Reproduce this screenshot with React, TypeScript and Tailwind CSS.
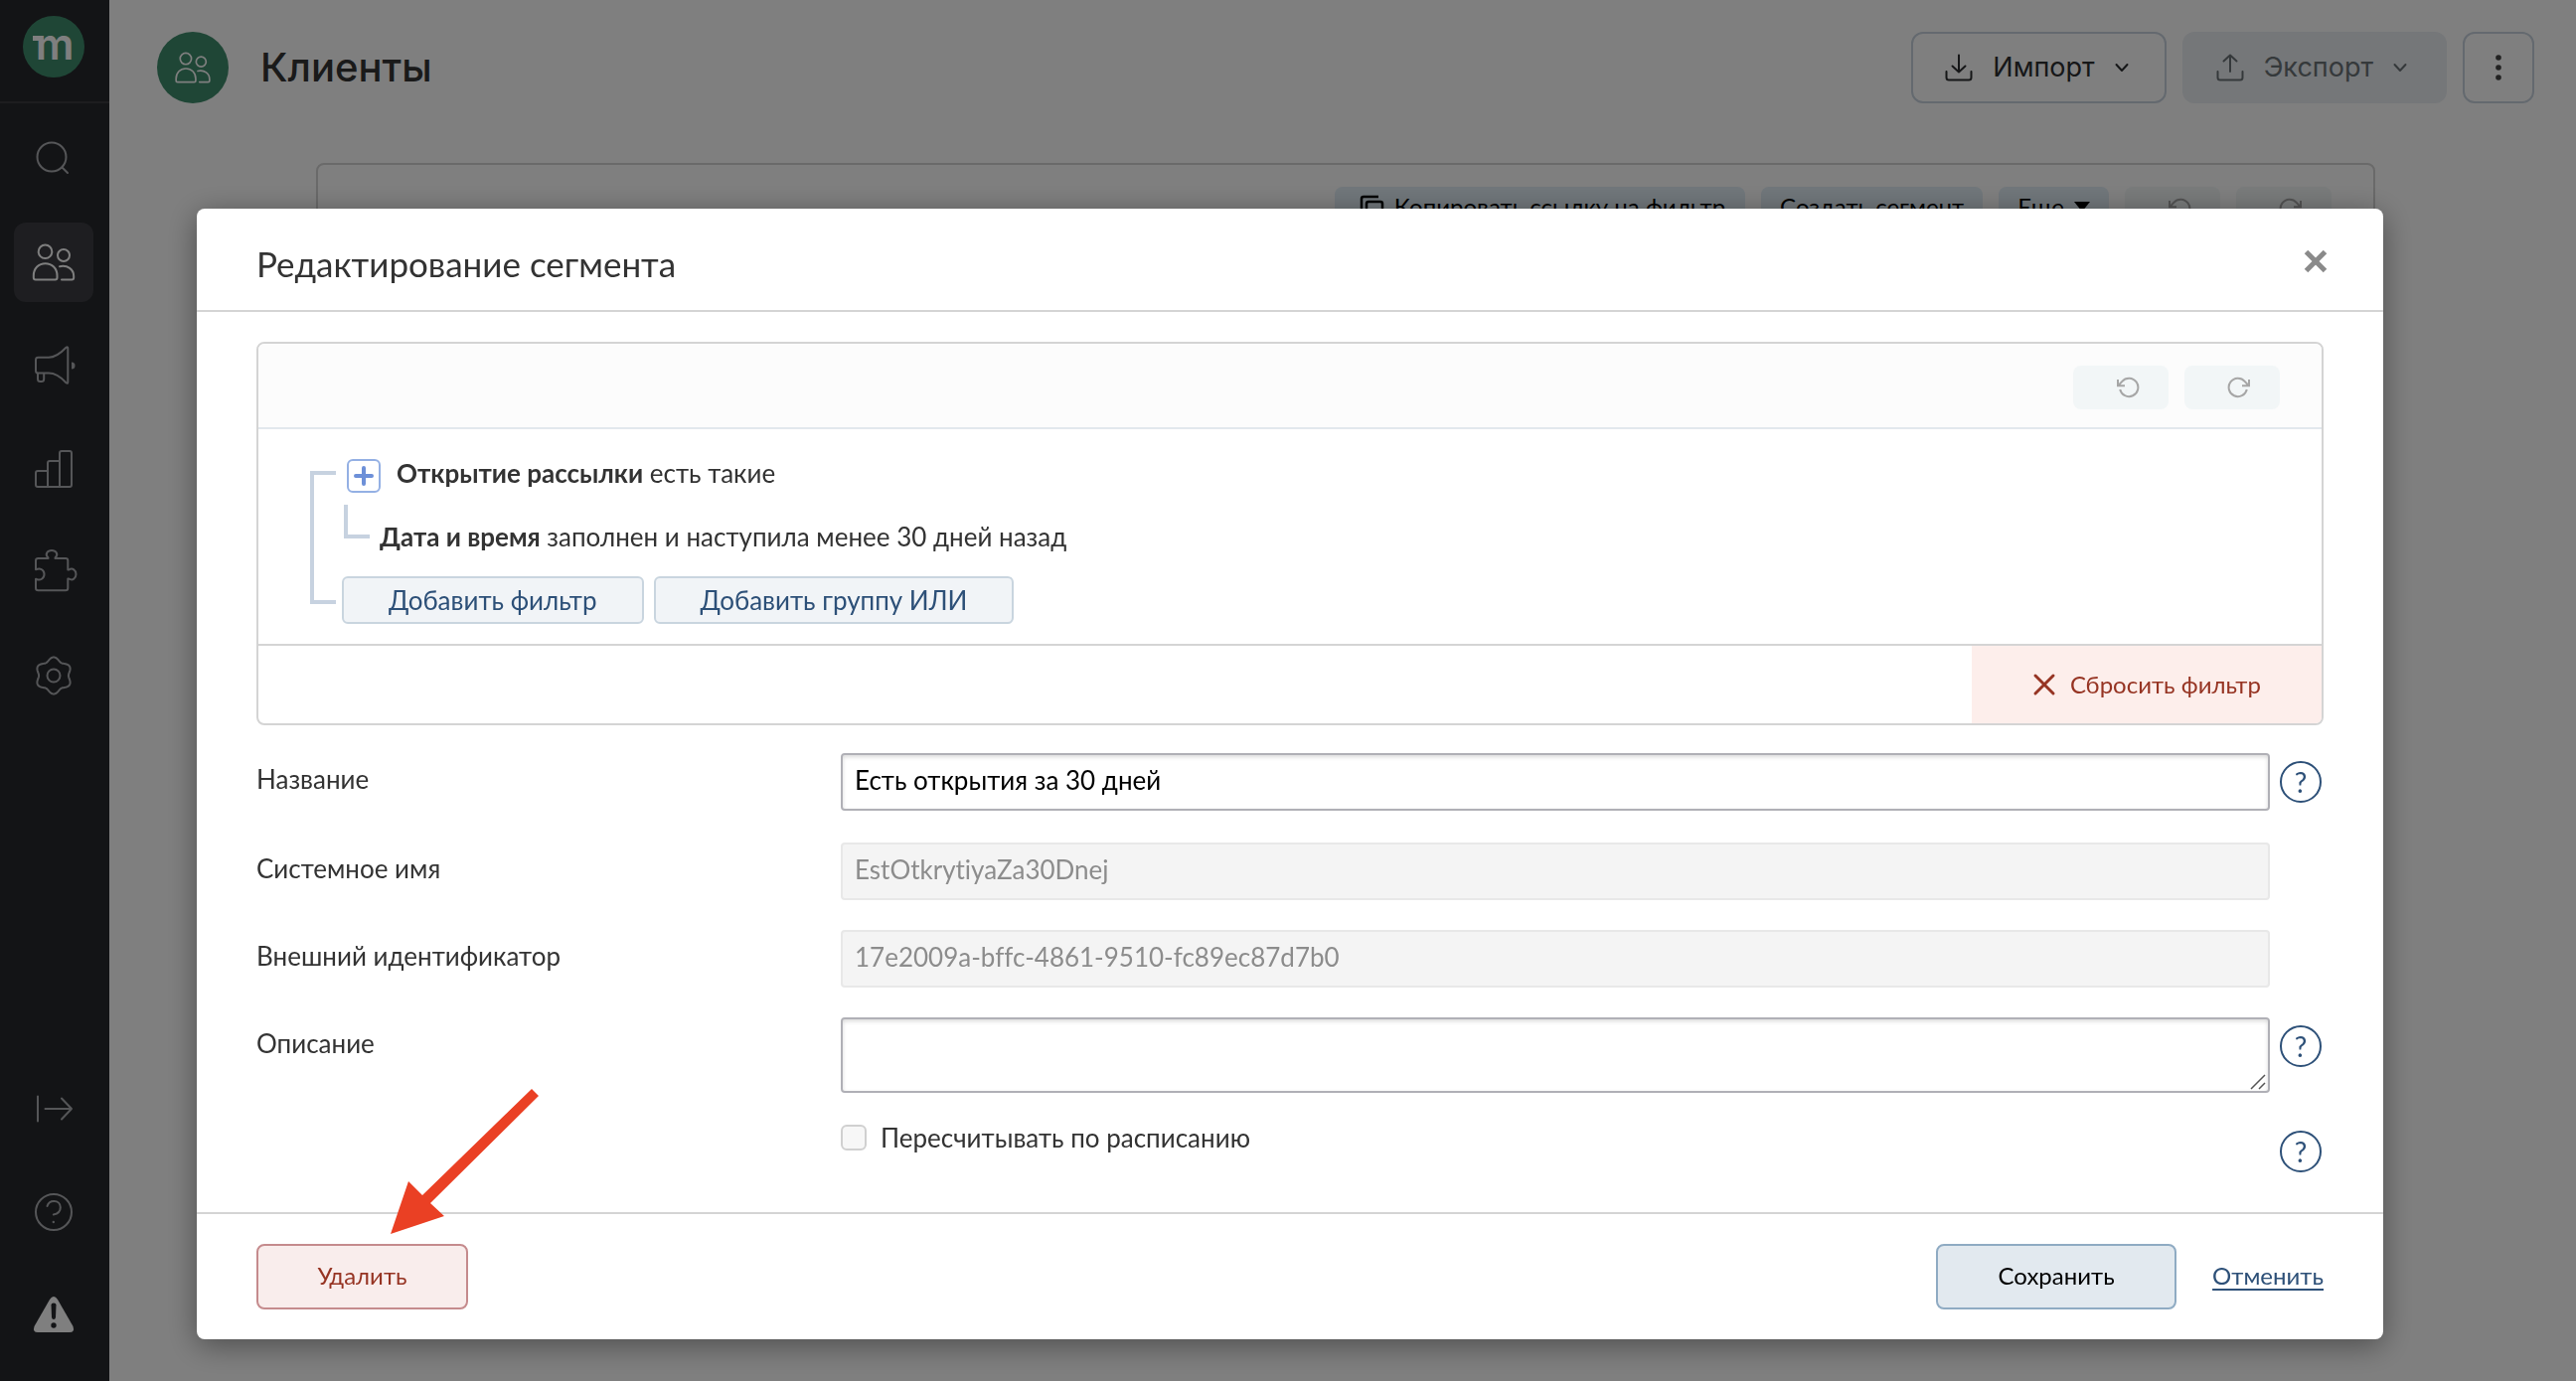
import React, { useState } from "react";

type IconProps = { className?: string };

const strokeProps = {
  fill: "none",
  stroke: "currentColor",
  strokeWidth: 2,
  strokeLinecap: "round" as const,
  strokeLinejoin: "round" as const,
};

const SearchIcon = () => (
  <svg viewBox="0 0 48 48" className="size-12" {...strokeProps}>
    <circle cx="22" cy="22" r="14.5" />
    <path d="M32.5 32.5 38 38" />
  </svg>
);

const ClientsIcon = ({ className = "size-12" }: IconProps) => (
  <svg viewBox="0 0 48 48" className={className} {...strokeProps}>
    <circle cx="15.5" cy="13.3" r="6.8" />
    <circle cx="34" cy="17" r="6" />
    <path d="M3.8 37.5C3.8 30 9 25.2 15.6 25.2S27.5 30 27.5 37.5v2q0 2-2 2H5.8q-2 0-2-2z" />
    <path d="M30 28.2c8-1.700 14.200 3 14.200 9.800v1.500q0 2-2 2H32" />
  </svg>
);

const MegaphoneIcon = () => (
  <svg viewBox="0 0 48 48" className="size-12" {...strokeProps}>
    <path d="M8.500 15.800H19C27 15.800 33 9.500 36.500 5.800Q38.300 4.600 38.300 6.500V40.500Q38.300 42.600 36.500 41.200C33 37.500 27 31.600 19 31.600H8.500Q6 31.600 6 29.200V18.200Q6 15.800 8.500 15.800z" />
    <path d="M8 32v5.500q0 2.500 2.500 2.500h1.200q2.500 0 2.500-2.500V32" />
    <path d="M42 20.500a3.500 3.500 0 0 1 0 7z" fill="currentColor" stroke="none" />
  </svg>
);

const ChartIcon = () => (
  <svg viewBox="0 0 48 48" className="size-12" {...strokeProps}>
    <path d="M18 42H8q-2 0-2-2V28q0-2 2-2h10z" />
    <path d="M18 42V18q0-2 2-2h10v26z" />
    <path d="M30 42V8q0-2 2-2h8q2 0 2 2v32q0 2-2 2z" />
  </svg>
);

const PuzzleIcon = () => (
  <svg viewBox="0 0 48 48" className="size-12" {...strokeProps}>
    <path d="M8.500 10H18.500V9.500C14.500 5.500 18 2 22 2s7.500 3.500 3.500 7.500V10H36q2.300 0 2.300 2.300V21.500h1C43 19 46.500 22 46.500 26s-3.500 7-7.200 4.500h-1V40q0 2.300-2.300 2.300H8.500Q6 42.300 6 40V30.800h.5C10.500 33 14.500 30 14.500 26s-4-7-8-4.800H6V12.300Q6 10 8.500 10z" />
  </svg>
);

const gearPath =
  Array.from({ length: 120 }, (_, i) => {
    const angle = (i * Math.PI) / 60;
    const r = 16.7 + 1.8 * Math.cos(6 * angle);
    const x = (24 + r * Math.sin(angle)).toFixed(2);
    const y = (24 - r * Math.cos(angle)).toFixed(2);
    return `${i === 0 ? "M" : "L"}${x} ${y}`;
  }).join("") + "z";

const GearIcon = () => (
  <svg viewBox="0 0 48 48" className="size-12" {...strokeProps}>
    <path d={gearPath} />
    <circle cx="24" cy="24" r="6.500" />
  </svg>
);

const ExpandIcon = () => (
  <svg viewBox="0 0 48 48" className="size-12" {...strokeProps}>
    <path d="M8 11.500v25M15.500 24H42M32 13.500 42 24 32 34.500" />
  </svg>
);

const QuestionIcon = () => (
  <svg viewBox="0 0 48 48" className="size-12" {...strokeProps}>
    <circle cx="24" cy="24" r="18" />
    <path d="M17.500 18c1-3.500 4-5 6.800-5 3.700 0 6.500 2.600 6.500 6.200 0 4-3 6.500-7 7.200" />
    <circle cx="23.800" cy="34" r="1.200" fill="currentColor" stroke="none" />
  </svg>
);

const WarningIcon = () => (
  <svg viewBox="0 0 48 48" className="size-12" fill="currentColor">
    <path d="M20 8Q24 2 28 8L43.500 35Q45.500 41 40 41H8Q2.500 41 4.500 35z" />
    <path d="M21.500 13.500q0-2 2.500-2t2.500 2L26 26q-.3 2-2 2t-2-2z" fill="#26282c" />
    <circle cx="24" cy="34" r="2.700" fill="#26282c" />
  </svg>
);

const UndoIcon = ({ className = "" }: IconProps) => (
  <svg viewBox="0 0 24 24" className={`size-6 ${className}`} fill="none" stroke="currentColor" strokeWidth="2">
    <path d="M2 4v6.200h7M2.500 10 6.300 5.800A9.200 9.200 0 1 1 4.200 14" />
  </svg>
);

const DownloadIcon = () => (
  <svg viewBox="0 0 28 28" className="size-7" {...strokeProps}>
    <path d="M1.500 18v6q0 2.500 2.500 2.500h20q2.500 0 2.500-2.500v-6M14 1.500V18M7.500 12.500 14 18.500l6.500-6" />
  </svg>
);

const UploadIcon = () => (
  <svg viewBox="0 0 28 28" className="size-7" {...strokeProps}>
    <path d="M1.500 18v6q0 2.500 2.500 2.500h20q2.500 0 2.500-2.500v-6M14 18V1.500M7.500 7.500 14 1.500l6.500 6" />
  </svg>
);

const ChevronIcon = () => (
  <svg viewBox="0 0 14 14" className="size-3.5" {...strokeProps}>
    <path d="M1.500 4 7 10l5.500-6" />
  </svg>
);

const navItems = [
  { label: "Поиск", icon: <SearchIcon />, active: false },
  { label: "Клиенты", icon: <ClientsIcon />, active: true },
  { label: "Кампании", icon: <MegaphoneIcon />, active: false },
  { label: "Отчеты", icon: <ChartIcon />, active: false },
  { label: "Интеграции", icon: <PuzzleIcon />, active: false },
  { label: "Настройки", icon: <GearIcon />, active: false },
];

const bottomItems = [
  { label: "Развернуть", icon: <ExpandIcon />, active: false },
  { label: "Помощь", icon: <QuestionIcon />, active: false },
  { label: "Предупреждения", icon: <WarningIcon />, active: false, bright: true },
];

const NavButton = ({ label, icon, active, bright }: { label: string; icon: React.ReactNode; active: boolean; bright?: boolean }) => (
  <button
    aria-label={label}
    className={`flex size-20 items-center justify-center rounded-xl ${
      active ? "bg-[#3c3d42]" : ""
    } ${active || bright ? "text-white" : "text-[#abacb0]"}`}
  >
    {icon}
  </button>
);

const Sidebar = () => (
  <aside className="flex w-[110px] shrink-0 flex-col bg-[#26282c]">
    <div className="flex h-[104px] justify-center border-b-2 border-[#3a3b3f] pr-0.5 pt-4">
      <svg viewBox="0 0 62 62" className="size-[62px] overflow-visible">
        <circle cx="31" cy="31" r="31" fill="#3f8d6d" />
        <rect x="10" y="20" width="7" height="5" fill="#fff" />
        <text x="32" y="44" textAnchor="middle" fill="#fff" fontFamily="Inter, sans-serif" fontWeight="600" fontSize="43">
          m
        </text>
      </svg>
    </div>
    <nav className="flex flex-1 flex-col items-center gap-6 pr-0.5 pb-[26px] pt-4">
      {navItems.map((item) => (
        <NavButton key={item.label} {...item} />
      ))}
      <div className="mt-auto flex flex-col gap-6">
        {bottomItems.map((item) => (
          <NavButton key={item.label} {...item} />
        ))}
      </div>
    </nav>
  </aside>
);

const PageHeader = () => (
  <header className="flex items-center justify-between pl-12 pr-[42px] pt-8 font-['Inter',sans-serif]">
    <div className="flex items-center gap-8">
      <span className="flex size-[72px] items-center justify-center rounded-full bg-[#3f8d6d] text-white">
        <ClientsIcon className="size-10" />
      </span>
      <h1 className="text-[40px] leading-[68px] font-medium text-[#343434]">Клиенты</h1>
    </div>
    <div className="flex gap-4 text-[27px]">
      <button className="flex h-[72px] items-center gap-5 rounded-xl border-2 border-[#c8d3de] px-8 pr-9 text-[#2c2e30]">
        <DownloadIcon />
        Импорт
        <ChevronIcon />
      </button>
      <button className="flex h-[72px] items-center gap-5 rounded-xl bg-[#ebeff3] pl-[34px] pr-10 text-[#6b7276]">
        <UploadIcon />
        Экспорт
        <ChevronIcon />
      </button>
      <button
        aria-label="Еще"
        className="flex size-[72px] items-center justify-center rounded-xl border-2 border-[#c8d3de] text-[#444]"
      >
        <svg viewBox="0 0 6 28" className="h-7 w-1.5" fill="currentColor">
          <circle cx="3" cy="4" r="2.800" />
          <circle cx="3" cy="14" r="2.800" />
          <circle cx="3" cy="24" r="2.800" />
        </svg>
      </button>
    </div>
  </header>
);

const PageFilter = () => (
  <section className="ml-52 mr-[202px] mt-[60px] h-[600px] rounded-lg border-2 border-[#d4d4d4]">
    <div className="flex justify-end gap-4 pr-[42px] pt-[22px] text-2xl text-black">
      <button className="flex h-11 items-center gap-2.5 rounded-lg bg-[#e2eef6] pb-1 pl-6 pr-5">
        <svg viewBox="0 0 26 26" className="size-[26px]" fill="none" stroke="currentColor" strokeWidth="2.500">
          <path d="M3 18V5q0-2 2-2h15" />
          <rect x="8" y="8" width="16" height="16" rx="2" />
        </svg>
        Копировать ссылку на фильтр
      </button>
      <button className="h-11 rounded-lg bg-[#e2eef6] px-[19px] pb-1">Создать сегмент</button>
      <button className="flex h-11 items-center gap-2.5 rounded-lg bg-[#e2eef6] px-[19px] pb-1">
        Еще
        <svg viewBox="0 0 16 10" className="h-2.5 w-4" fill="currentColor">
          <path d="M0 0h16L8 10z" />
        </svg>
      </button>
      <HistoryButtons />
    </div>
  </section>
);

const HistoryButtons = () => (
  <>
    <button aria-label="Отменить действие" className="flex h-11 w-24 items-center rounded-lg bg-[#f2f6f7] pl-[43px] text-[#a6a6a6]">
      <UndoIcon />
    </button>
    <button aria-label="Повторить действие" className="flex h-11 w-24 items-center rounded-lg bg-[#f2f6f7] pl-[43px] text-[#a6a6a6]">
      <UndoIcon className="-scale-x-100" />
    </button>
  </>
);

const addButtonClass =
  "h-12 rounded-md border-2 border-[#c9d5df] bg-[#f1f4f7] px-[45px] text-[26px] text-[#2d5078]";

const FilterBox = () => (
  <section className="overflow-hidden rounded-lg border-2 border-[#d4d4d4]">
    <div className="flex justify-end gap-4 border-b-2 border-[#e2e8ed] bg-[#fcfcfc] pb-[18px] pr-[42px] pt-[22px]">
      <HistoryButtons />
    </div>
    <div className="flex pb-5 pl-[52px]">
      <div className="mt-[42px] h-[134px] w-[26px] border-y-4 border-l-4 border-[#c7d2e0]" />
      <div className="ml-1.5 pt-[30px] text-[26px] leading-7 text-[#333]">
        <div className="flex items-start pl-[5px]">
          <button
            aria-label="Добавить условие"
            className="flex size-[34px] items-center justify-center rounded-md border-2 border-[#94b0e4] text-[#6d90d8]"
          >
            <svg viewBox="0 0 20 20" className="size-5" fill="none" stroke="currentColor" strokeWidth="4" strokeLinecap="round">
              <path d="M10 2v16M2 10h16" />
            </svg>
          </button>
          <p className="ml-4">
            <b>Открытие рассылки</b> есть такие
          </p>
        </div>
        <div className="mt-3 flex items-start pl-0.5">
          <div className="h-[34px] w-[26px] border-b-4 border-l-4 border-[#c7d2e0]" />
          <p className="ml-2.5 mb-1.5 mt-[18px]">
            <b>Дата и время</b> заполнен и наступила менее 30 дней назад
          </p>
        </div>
        <div className="mt-5 flex gap-2.5">
          <button className={addButtonClass}>Добавить фильтр</button>
          <button className={addButtonClass}>Добавить группу ИЛИ</button>
        </div>
      </div>
    </div>
    <div className="flex justify-end border-t-2 border-[#d4d4d4]">
      <button className="flex h-[78px] w-[352px] items-center justify-center gap-3.5 bg-[#fdeeeb] text-2xl text-[#963423]">
        <svg viewBox="0 0 24 24" className="size-6" fill="none" stroke="currentColor" strokeWidth="3" strokeLinecap="round">
          <path d="M3 3l18 18M21 3 3 21" />
        </svg>
        Сбросить фильтр
      </button>
    </div>
  </section>
);

const HelpButton = () => (
  <button
    aria-label="Подсказка"
    className="ml-2.5 mb-2.5 mt-2 flex size-[42px] items-center justify-center rounded-full border-2 border-[#2d5078] text-[28px] leading-none text-[#2d5078]"
  >
    ?
  </button>
);

const rowClass = "grid grid-cols-[588px_1fr_54px] items-start";
const labelClass = "leading-[52px] text-[#333]";
const disabledInputClass =
  "h-[58px] w-full rounded border-2 border-[#e8e8e8] bg-[#f4f4f4] px-3 pb-1 text-[#8c8c8c] [font-variant-ligatures:none]";

const SegmentForm = () => {
  const [name, setName] = useState("Есть открытия за 30 дней");
  const [description, setDescription] = useState("");
  const [scheduled, setScheduled] = useState(false);

  return (
    <form className="mt-7 flex flex-col gap-[30px] text-[26px]">
      <div className={rowClass}>
        <label htmlFor="name" className={labelClass}>
          Название
        </label>
        <input
          id="name"
          value={name}
          onChange={(e) => setName(e.target.value)}
          className="h-[58px] w-full rounded border-2 border-[#b0b0b6] px-3 pb-1 text-black shadow-[inset_0_2px_4px_rgba(0,0,0,0.15)]"
        />
        <HelpButton />
      </div>
      <div className={rowClass}>
        <label htmlFor="system-name" className={labelClass}>
          Системное имя
        </label>
        <input id="system-name" disabled value="EstOtkrytiyaZa30Dnej" className={disabledInputClass} />
      </div>
      <div className={rowClass}>
        <label htmlFor="external-id" className={labelClass}>
          Внешний идентификатор
        </label>
        <input id="external-id" disabled value="17e2009a-bffc-4861-9510-fc89ec87d7b0" className={disabledInputClass} />
      </div>
      <div className={rowClass}>
        <label htmlFor="description" className={labelClass}>
          Описание
        </label>
        <div className="relative h-[76px]">
          <textarea
            id="description"
            value={description}
            onChange={(e) => setDescription(e.target.value)}
            className="block h-full w-full resize-none rounded border-2 border-[#b0b0b6] px-3 py-2 shadow-[inset_0_2px_4px_rgba(0,0,0,0.15)]"
          />
          <svg viewBox="0 0 16 16" className="absolute bottom-[3px] right-1 size-4" fill="none" stroke="#555" strokeWidth="1.500">
            <path d="M1 15 15 1M9 15l6-6" />
          </svg>
        </div>
        <HelpButton />
      </div>
      <div className={rowClass}>
        <label className="col-start-2 flex items-center gap-3.5 leading-[30px] text-[#333]">
          <input
            type="checkbox"
            checked={scheduled}
            onChange={(e) => setScheduled(e.target.checked)}
            className="size-[26px] appearance-none rounded-md border-2 border-[#d0d0d0] bg-[#f7f7f7] checked:bg-[#2d5078]"
          />
          Пересчитывать по расписанию
        </label>
        <HelpButton />
      </div>
    </form>
  );
};

const SegmentDialog = () => (
  <div className="fixed inset-0 overflow-hidden bg-black/50 pl-[198px] pr-[194px] pt-[210px]">
    <div
      role="dialog"
      aria-labelledby="dialog-title"
      className="rounded-lg bg-white shadow-[0_6px_30px_rgba(0,0,0,0.4)]"
    >
      <div className="flex h-[104px] items-center justify-between border-b-2 border-[#d4d4d4] pl-[60px] pr-[56px] pt-1">
        <h2 id="dialog-title" className="pt-1 text-[35px] text-[#333]">
          Редактирование сегмента
        </h2>
        <button aria-label="Закрыть" className="text-[#8a8a8a]">
          <svg viewBox="0 0 24 24" className="size-6" fill="none" stroke="currentColor" strokeWidth="5">
            <path d="M2.500 2.500l19 19M21.500 2.500l-19 19" />
          </svg>
        </button>
      </div>
      <div className="px-[60px] py-[30px]">
        <FilterBox />
        <SegmentForm />
      </div>
      <div className="relative flex items-center justify-between border-t-2 border-[#d4d4d4] px-[60px] py-[30px] text-2xl">
        <button className="h-[66px] w-[213px] rounded-lg border-2 border-[#c58b8d] bg-[#f9edec] pb-0.5 text-[#963423]">
          Удалить
        </button>
        <div className="flex items-center gap-9">
          <button className="h-[66px] w-[242px] rounded-lg border-2 border-[#8fabc3] bg-[#e2e9ef] pb-0.5 text-black">
            Сохранить
          </button>
          <a href="#" className="pb-0.5 text-[#2d5078] underline decoration-2 underline-offset-4">
            Отменить
          </a>
        </div>
        <svg viewBox="0 0 150 146" className="pointer-events-none absolute -top-[126px] left-[195px] h-[146px] w-[150px]" fill="#ea4024">
          <path d="M0 146 18 93 32 107 142 0 149 7 40 115 54 128z" />
        </svg>
      </div>
    </div>
  </div>
);

const App = () => {
  return (
    <div className="flex min-h-screen bg-white font-['Lato','Noto_Sans',sans-serif]">
      <Sidebar />
      <main className="min-w-0 flex-1">
        <PageHeader />
        <PageFilter />
      </main>
      <SegmentDialog />
    </div>
  );
};

export default App;
